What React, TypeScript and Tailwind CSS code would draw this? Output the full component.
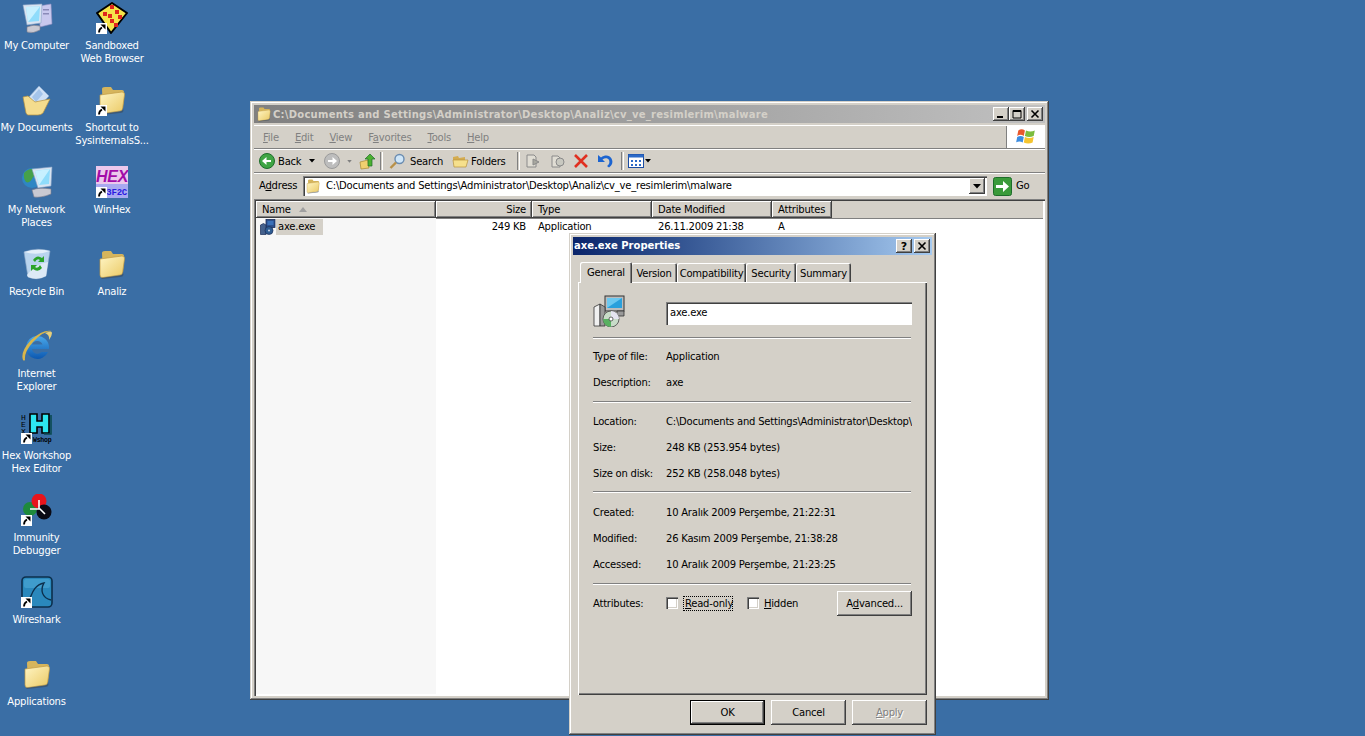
import React from "react";

const Shortcut = () => (
  <span className="absolute left-0 bottom-0 w-[11px] h-[11px] bg-white flex items-center justify-center">
    <svg width="9" height="9" viewBox="0 0 9 9"><path d="M2 8.5 C2 6 3 4.5 5 3.5" stroke="#000" strokeWidth="1.8" fill="none" /><path d="M3.5 0.5 H8.5 V5.5Z" fill="#000" /></svg>
  </span>
);

const FolderIcon = ({ size = 32 }: { size?: number }) => (
  <svg width={size} height={size} viewBox="0 0 32 32">
    <defs>
      <linearGradient id="fg" x1="0" y1="0" x2="1" y2="1"><stop offset="0" stopColor="#fff5c4" /><stop offset="1" stopColor="#eac964" /></linearGradient>
    </defs>
    <path d="M6 5 Q6 3 9 3 L15 3 L17 6 L26 6 Q28 6 28 8 L27 24 L7 28 Z" fill="#d6b55c" />
    <path d="M4 11 L26 8 Q29 8 28.5 11 L26.5 25 Q26 27 24 27 L7 29.5 Q4 30 4 27 Z" fill="url(#fg)" stroke="#c09a42" strokeWidth=".7" />
    <path d="M5 30 L24 27.5 Q27 27 27 24 L27.5 27 Q27 29 24 29 L6 31Z" fill="#3c4a58" opacity=".6" />
  </svg>
);

const ComputerIcon = () => (
  <svg width="32" height="32" viewBox="0 0 32 32">
    <path d="M18 4 L30 2 L31 22 L19 25Z" fill="#c8c8ee" stroke="#8f8fc0" strokeWidth=".6" />
    <path d="M22 7h6v1.5h-6zM22 11h6v1.5h-6z" fill="#8a8ab8" />
    <path d="M2 3 L21 2 L20 21 L6 23Z" fill="#d8e4f2" stroke="#8aa3c4" strokeWidth=".6" />
    <path d="M5 5 L19 4.5 L18 19 L7 20Z" fill="#8fdcfb" />
    <path d="M5 5 L19 4.5 L8 19 L7 20Z" fill="#c7f0ff" />
    <path d="M6 25 Q12 22 19 24 L19 28 Q12 32 6 30Z" fill="#c9c9d2" stroke="#7c7c8c" strokeWidth=".6" />
  </svg>
);

const SandboxIcon = () => (
  <svg width="32" height="32" viewBox="0 0 32 32">
    <path d="M1 11 L16 1 L31 11 L15 31 Z" fill="#f6e34a" stroke="#000" strokeWidth="2" strokeLinejoin="round" />
    {[[14, 3], [7, 10], [12, 12], [19, 8], [14, 17], [22, 13], [18, 21]].map(([x, y], i) => (
      <rect key={i} x={x} y={y} width="4" height="4" fill="#e0261c" />
    ))}
  </svg>
);

const DocsIcon = () => (
  <svg width="32" height="32" viewBox="0 0 32 32">
    <path d="M8 13 L18 2 L28 12 L18 23Z" fill="#cfe1f6" stroke="#8aa8cc" strokeWidth=".6" />
    <path d="M11 13 L18 5 L22 10 L15 18Z" fill="#a4c4ea" />
    <path d="M2 13 L7 12 L14 18 L29 15 L22 29 Q20 31 17 31 L7 31 Q6 31 5 29Z" fill="#f4dc8e" stroke="#b8923e" strokeWidth=".7" />
  </svg>
);

const NetworkIcon = () => (
  <svg width="32" height="32" viewBox="0 0 32 32">
    <circle cx="11" cy="12" r="10" fill="#2e86c4" />
    <path d="M3 7 Q8 2 14 3 Q17 8 12 11 Q9 18 5 16 Q2 12 3 7Z" fill="#46a04a" />
    <path d="M11 3 L31 1 L30 20 L17 22Z" fill="#d8e4f2" stroke="#8aa3c4" strokeWidth=".6" />
    <path d="M14 5 L29 3 L28 18 L18 19Z" fill="#8fdcfb" />
    <path d="M14 5 L29 3 L18 19Z" fill="#c7f0ff" />
    <path d="M11 24 Q18 21 30 23 L30 28 Q20 32 13 31Z" fill="#c9c9d2" stroke="#7c7c8c" strokeWidth=".6" />
  </svg>
);

const WinHexIcon = () => (
  <svg width="32" height="32" viewBox="0 0 32 32">
    <rect width="32" height="18" fill="#ecc8ec" />
    <rect y="18" width="32" height="14" fill="#a9a9f0" />
    <text x="16" y="16" textAnchor="middle" fontFamily="Liberation Sans" fontWeight="700" fontStyle="italic" fontSize="16" fill="#a20ca8">HEX</text>
    <text x="31" y="29" textAnchor="end" fontFamily="Liberation Mono" fontWeight="700" fontSize="9" fill="#2a1ae0">3F2C</text>
  </svg>
);

const RecycleIcon = () => (
  <svg width="32" height="32" viewBox="0 0 32 32">
    <path d="M3 4 Q16 -1 29 3 L25 28 Q16 33 7 29Z" fill="#b9d4ee" stroke="#8fa9c8" strokeWidth=".6" />
    <path d="M3 4 Q16 0 29 3 Q16 8 3 4Z" fill="#e4effa" />
    <path d="M6 27 Q14 16 27 14 L25 28 Q16 33 7 29Z" fill="#dce9f6" />
    <path d="M12 12 Q16 6 21 10 L23 8 L23 14 L17 14 L19 12 Q16 10 14 14Z M21 20 Q17 25 12 21 L10 23 L10 17 L16 17 L14 19 Q17 21 19 17Z" fill="#2aa32a" />
  </svg>
);

const IEIcon = () => (
  <svg width="32" height="32" viewBox="0 0 32 32">
    <defs>
      <linearGradient id="ieg" x1="0" y1="0" x2="0" y2="1"><stop offset="0" stopColor="#4aa8ea" /><stop offset="1" stopColor="#0c58b0" /></linearGradient>
    </defs>
    <path d="M16 6 A11.5 11.5 0 1 0 27 22 L20.5 22 A5.5 5.5 0 0 1 11 19 H28 V17 A11.5 11.5 0 0 0 16 6Z M11 14.5 A5.5 5 0 0 1 21.5 14.5Z" fill="url(#ieg)" fillRule="evenodd" />
    <path d="M2 30 Q-1 22 10 10 Q22 -1 31 1 Q22 1 12 12 Q3 22 4 30 Q3 31 2 30Z" fill="#d9b64a" />
    <path d="M24 3 Q31 0 31 3 Q31 6 28 10 Q29 5 24 3Z" fill="#e8cf7a" />
  </svg>
);

const HexWorkshopIcon = () => (
  <svg width="32" height="32" viewBox="0 0 32 32">
    <path d="M9 2h7v7h5V2h7v19h-7v-6h-5v6H9Z" fill="#2de6f0" stroke="#000" strokeWidth="1.6" />
    <path d="M30 3v19H23" stroke="#0a4a50" strokeWidth="1.6" fill="none" />
    <text x="0" y="8" fontFamily="Liberation Mono" fontSize="8" fill="#000">H</text>
    <text x="0" y="15" fontFamily="Liberation Mono" fontSize="8" fill="#000">E</text>
    <text x="0" y="22" fontFamily="Liberation Mono" fontSize="8" fill="#000">X</text>
    <text x="12" y="30" fontFamily="Liberation Mono" fontSize="6.5" fontWeight="700" fill="#000">Wshop</text>
  </svg>
);

const ImmunityIcon = () => (
  <svg width="32" height="32" viewBox="0 0 32 32">
    <circle cx="9" cy="15" r="7" fill="#1e8a3c" />
    <circle cx="18" cy="7" r="7.5" fill="#e8141c" />
    <circle cx="23" cy="18" r="7.5" fill="#0a0a14" />
    <path d="M18 6 V15 M9 15 H19 L24 20" stroke="#fff" strokeWidth="1.6" fill="none" />
  </svg>
);

const WiresharkIcon = () => (
  <svg width="32" height="32" viewBox="0 0 32 32">
    <rect x="1" y="1" width="30" height="30" rx="4" fill="#2a88bc" stroke="#0c2f4c" strokeWidth="1.6" />
    <rect x="3" y="3" width="26" height="9" rx="2" fill="#3f9ccc" />
    <path d="M5 27 C11 25 9 10 23 7 C19 14 21 22 30 24" fill="none" stroke="#0c2f4c" strokeWidth="1.4" />
  </svg>
);

const desktop: { label: React.ReactNode; icon: React.ReactNode; short?: boolean }[] = [
  { label: <>My Computer</>, icon: <ComputerIcon /> },
  { label: <>Sandboxed<br />Web Browser</>, icon: <SandboxIcon />, short: true },
  { label: <>My Documents</>, icon: <DocsIcon /> },
  { label: <>Shortcut to<br />SysinternalsS...</>, icon: <FolderIcon />, short: true },
  { label: <>My Network<br />Places</>, icon: <NetworkIcon /> },
  { label: <>WinHex</>, icon: <WinHexIcon />, short: true },
  { label: <>Recycle Bin</>, icon: <RecycleIcon /> },
  { label: <>Analiz</>, icon: <FolderIcon /> },
];

const DeskIcon = ({ label, icon, short }: { label: React.ReactNode; icon: React.ReactNode; short?: boolean }) => (
  <div className="h-[82px] flex flex-col items-center text-white text-center">
    <div className="relative w-[32px] h-[32px] mt-[2px]">
      {icon}
      {short && <Shortcut />}
    </div>
    <div className="mt-[5px] leading-[13px] whitespace-nowrap">{label}</div>
  </div>
);

const raised = "shadow-[inset_-1px_-1px_#404040,inset_1px_1px_#ffffff,inset_-2px_-2px_#808080]";
const frame = "bg-[#d4d0c8] shadow-[inset_-1px_-1px_#404040,inset_1px_1px_#d4d0c8,inset_-2px_-2px_#808080,inset_2px_2px_#ffffff]";

const CapBtn = ({ kind }: { kind: "min" | "max" | "close" | "help" }) => (
  <div className={`w-[16px] h-[14px] bg-[#d4d0c8] ${raised} flex items-center justify-center`}>
    {kind === "help" ? (
      <span className="font-bold text-[11px] leading-none tracking-normal text-black">?</span>
    ) : (
      <svg width="10" height="10" viewBox="0 0 10 10">
        {kind === "min" && <rect x="1" y="7" width="6" height="2" fill="#000" />}
        {kind === "max" && <path d="M1 1.5H9V9H1Z" fill="none" stroke="#000" strokeWidth="1" />}
        {kind === "max" && <rect x="1" y="1" width="8" height="2" fill="#000" />}
        {kind === "close" && <path d="M1.5 1.5L8.5 8.5M8.5 1.5L1.5 8.5" stroke="#000" strokeWidth="1.6" />}
      </svg>
    )}
  </div>
);

const Sep = () => <div className="w-[2px] h-[18px] mx-[3px] border-l border-[#808080] shadow-[1px_0_#fff]" />;

const Etched = ({ className = "" }: { className?: string }) => (
  <div className={`w-[318px] h-[2px] border-t border-[#808080] border-b border-b-white ${className}`} />
);

const ColHead = ({ w, right, children }: { w: string; right?: boolean; children: React.ReactNode }) => (
  <div className={`${w} h-[17px] px-[6px] flex items-center ${right ? "justify-end" : ""} bg-[#d4d0c8] ${raised} shrink-0`}>{children}</div>
);

const SetupIcon = () => (
  <svg width="32" height="32" viewBox="0 0 32 32">
    <rect x="12" y="1" width="19" height="15" fill="#bcbcbc" stroke="#333" strokeWidth="1" />
    <rect x="14" y="3" width="15" height="10" fill="#2aa0dc" />
    <path d="M14 3h15L14 13Z" fill="#6cc8f0" />
    <path d="M24 16h7v5h-7z" fill="#999" stroke="#333" strokeWidth=".8" />
    <path d="M1 12 L7 9 L7 31 L1 31Z" fill="#f0f0f0" stroke="#333" strokeWidth=".8" />
    <path d="M7 9 L12 12 L12 31 L7 31Z" fill="#9a9a9a" stroke="#333" strokeWidth=".8" />
    <circle cx="18" cy="24" r="8" fill="#c8dcc8" stroke="#444" strokeWidth=".8" />
    <path d="M18 24 L18 16 A8 8 0 0 1 26 24Z" fill="#e4e4f0" />
    <path d="M18 24 L18 32 A8 8 0 0 1 10 24Z" fill="#58b060" />
    <circle cx="18" cy="24" r="2" fill="#fff" stroke="#444" strokeWidth=".8" />
  </svg>
);

const SetupSmall = () => (
  <svg width="16" height="16" viewBox="0 0 16 16">
    <rect x="6" y="0.5" width="9" height="8" fill="#2c4f8c" stroke="#1a2c58" strokeWidth=".8" />
    <rect x="7.5" y="2" width="6" height="4" fill="#3a70b8" />
    <path d="M0.5 6 L3.5 4.5 L6 6 V15.5 H0.5Z" fill="#44608c" stroke="#1a2c58" strokeWidth=".7" />
    <circle cx="9" cy="11.5" r="4" fill="#2e5c92" stroke="#1a2c58" strokeWidth=".7" />
    <circle cx="9" cy="11.5" r="1" fill="#d0d8e8" />
  </svg>
);

const Row = ({ label, value }: { label: string; value: string }) => (
  <div className="h-[26px] flex items-center whitespace-nowrap">
    <div className="w-[73px] shrink-0">{label}</div>
    <div className="w-[246px] whitespace-nowrap [clip-path:inset(0)]">{value}</div>
  </div>
);

const Check = () => <div className="w-[12px] h-[12px] bg-white shrink-0 shadow-[inset_1px_1px_#808080,inset_2px_2px_#404040,inset_-1px_-1px_#ffffff,inset_-2px_-2px_#d4d0c8]" />;

const Tab = ({ children, w, active }: { children: React.ReactNode; w: string; active?: boolean }) => (
  <div className={`${w} flex items-center justify-center bg-[#d4d0c8] rounded-t-[2px] shadow-[inset_1px_1px_#ffffff,inset_-1px_0_#404040,inset_-2px_0_#808080] ${active ? "h-[21px] relative z-10 -mb-px -mr-[1px]" : "h-[19px] pt-[1px]"}`}>{children}</div>
);

const Btn = ({ children, def, disabled, w = "w-[75px]" }: { children: React.ReactNode; def?: boolean; disabled?: boolean; w?: string }) => (
  <div className={`${w} h-[25px] flex items-center justify-center bg-[#d4d0c8] ${def ? "border border-black shadow-[inset_-1px_-1px_#404040,inset_1px_1px_#ffffff,inset_-2px_-2px_#808080]" : raised} ${disabled ? "text-[#808080] [text-shadow:1px_1px_0_#ffffff]" : ""}`}>{children}</div>
);

export default function App() {
  return (
    <div className="relative w-[1365px] h-[736px] overflow-hidden bg-[#3a6ea5] font-['DejaVu_Sans',sans-serif] text-[10px] tracking-[-0.22px] text-black">
      {/* desktop icons */}
      <div className="flex flex-col w-[151px]">
        <div className="grid grid-cols-[73px_78px]">
          {desktop.map((d, i) => <DeskIcon key={i} {...d} />)}
        </div>
        <div className="w-[73px]">
          <DeskIcon label={<>Internet<br />Explorer</>} icon={<IEIcon />} />
          <DeskIcon label={<>Hex Workshop<br />Hex Editor</>} icon={<HexWorkshopIcon />} short />
          <DeskIcon label={<>Immunity<br />Debugger</>} icon={<ImmunityIcon />} short />
          <DeskIcon label={<>Wireshark</>} icon={<WiresharkIcon />} short />
          <DeskIcon label={<>Applications</>} icon={<FolderIcon />} />
        </div>
      </div>

      {/* Explorer window */}
      <div className={`absolute left-[250px] top-[101px] w-[799px] h-[599px] p-[4px] flex flex-col ${frame}`}>
        <div className="h-[18px] shrink-0 flex items-center pl-[2px] pr-[2px] bg-gradient-to-r from-[#808080] to-[#c0c0c0] text-[#d4d0c8] font-bold">
          <FolderIcon size={16} />
          <span className="ml-[1px] whitespace-nowrap tracking-[0.25px]">C:\Documents and Settings\Administrator\Desktop\Analiz\cv_ve_resimlerim\malware</span>
          <div className="ml-auto flex">
            <CapBtn kind="min" /><CapBtn kind="max" /><div className="w-[2px]" /><CapBtn kind="close" />
          </div>
        </div>
        {/* menu */}
        <div className="h-[24px] shrink-0 mt-[2px] flex border-t border-white items-center justify-between border-b border-b-[#808080] text-[#808080]">
          <div className="flex gap-[16px] pl-[9px]">
            <span><u>F</u>ile</span><span><u>E</u>dit</span><span><u>V</u>iew</span><span>F<u>a</u>vorites</span><span><u>T</u>ools</span><span><u>H</u>elp</span>
          </div>
          <div className="w-[39px] h-[22px] bg-white flex items-center justify-center border-l border-[#808080]">
            <svg width="22" height="20" viewBox="0 0 20 18">
              <path d="M3 3 Q6 1 9 3 L8 8 Q5 6 2 8Z" fill="#e8582c" />
              <path d="M10 3 Q14 5 18 3 L17 8 Q13 10 9 8Z" fill="#7cbc3c" />
              <path d="M2 9 Q5 7 8 9 L7 14 Q4 12 1 14Z" fill="#3c8ce0" />
              <path d="M9 9 Q13 11 17 9 L16 14 Q12 16 8 14Z" fill="#f4c430" />
            </svg>
          </div>
        </div>
        {/* toolbar */}
        <div className="h-[24px] shrink-0 flex items-center pl-[5px] border-t border-white border-b border-b-[#808080]">
          <svg width="16" height="16" viewBox="0 0 16 16"><circle cx="8" cy="8" r="7.5" fill="#3fa544" stroke="#1d6d2a" /><path d="M12 7H7.5V4L3 8l4.5 4V9H12Z" fill="#fff" /></svg>
          <span className="ml-[3px] w-[24px]">Back</span>
          <svg className="ml-[7px]" width="6" height="4" viewBox="0 0 6 4"><path d="M0 0H6L3 3.5Z" fill="#000" /></svg>
          <svg className="ml-[9px]" width="16" height="16" viewBox="0 0 16 16"><circle cx="8" cy="8" r="7.5" fill="#bdbdbd" stroke="#9a9a9a" /><path d="M4 7H8.5V4L13 8l-4.5 4V9H4Z" fill="#fff" /></svg>
          <svg className="ml-[7px]" width="5" height="3" viewBox="0 0 6 4"><path d="M0 0H6L3 3.5Z" fill="#808080" /></svg>
          <svg className="ml-[7px]" width="17" height="17" viewBox="0 0 17 17"><path d="M1 9 L9 7 L10 15 L2 16Z" fill="#f0d070" stroke="#a88830" strokeWidth=".7" /><path d="M11 1 L16 6 H13 V13 H9 V6 H6Z" fill="#4cb030" stroke="#1d6d2a" strokeWidth=".7" /></svg>
          <div className="ml-[1px]"><Sep /></div>
          <svg className="ml-[4px]" width="17" height="17" viewBox="0 0 17 17"><circle cx="10.5" cy="6" r="4.5" fill="#cfe6f8" stroke="#6a8cb0" strokeWidth="1.4" /><path d="M7 9.5L1.5 15" stroke="#b89048" strokeWidth="2.4" /></svg>
          <span className="ml-[4px] w-[32px]">Search</span>
          <svg className="ml-[10px]" width="17" height="16" viewBox="0 0 17 16"><path d="M1 4L6 3l1 2 6-1v3H1Z" fill="#d4ac50" /><path d="M1 7H16L14 14H2Z" fill="#f6e08c" stroke="#b8923e" strokeWidth=".7" /></svg>
          <span className="ml-[2px] w-[36px]">Folders</span>
          <div className="ml-[7px]"><Sep /></div>
          <svg className="ml-[3px]" width="17" height="16" viewBox="0 0 17 16"><path d="M2 2h7l2 2v10H2Z" fill="#e0ddd4" stroke="#8a8a8a" /><path d="M8 6l6 3-6 3Z" fill="#a8a8a0" stroke="#8a8a8a" /></svg>
          <svg className="ml-[7px]" width="17" height="16" viewBox="0 0 17 16"><path d="M3 3h6l2 2v9H3Z" fill="#e0ddd4" stroke="#8a8a8a" /><circle cx="11" cy="9" r="4" fill="#c8c8c0" stroke="#8a8a8a" /></svg>
          <svg className="ml-[7px]" width="16" height="16" viewBox="0 0 16 16"><path d="M2 2L14 14M14 2L2 14" stroke="#e03020" strokeWidth="2.6" /></svg>
          <svg className="ml-[7px]" width="17" height="16" viewBox="0 0 17 16"><path d="M2 2v7h7L6.5 6.5C9 4.5 12 5 13 7c1 2.5 0 4.5-2 6l2 1.5c3-2 4.5-5.5 2.5-9C13.5 2 9 1.5 5 4.5Z" fill="#1c64d0" /></svg>
          <div className="ml-[5px]"><Sep /></div>
          <svg className="ml-[2px]" width="16" height="14" viewBox="0 0 16 14"><rect x=".5" y=".5" width="15" height="13" fill="#fff" stroke="#1c4ca0" /><rect x=".5" y=".5" width="15" height="3" fill="#2c6ac8" /><path d="M3 6h2v2H3zM7 6h2v2H7zM11 6h2v2h-2zM3 10h2v2H3zM7 10h2v2H7zM11 10h2v2h-2z" fill="#2c6ac8" /></svg>
          <svg className="ml-[1px]" width="6" height="4" viewBox="0 0 6 4"><path d="M0 0H6L3 3.5Z" fill="#000" /></svg>
        </div>
        {/* address */}
        <div className="h-[25px] shrink-0 flex items-center pl-[5px] border-t border-white">
          <span className="w-[44px] pb-[1px]">A<u>d</u>dress</span>
          <div className="w-[684px] h-[20px] bg-white flex items-center pl-[2px] shadow-[inset_1px_1px_#808080,inset_2px_2px_#404040] relative">
            <FolderIcon size={16} />
            <span className="ml-[5px] pb-[1px] whitespace-nowrap">C:\Documents and Settings\Administrator\Desktop\Analiz\cv_ve_resimlerim\malware</span>
            <div className={`absolute right-[2px] top-[2px] w-[16px] h-[16px] bg-[#d4d0c8] ${raised} flex items-center justify-center`}>
              <svg width="8" height="5" viewBox="0 0 8 5"><path d="M0 0H8L4 4.5Z" fill="#000" /></svg>
            </div>
          </div>
          <svg className="ml-[6px]" width="19" height="19" viewBox="0 0 19 19"><rect x=".5" y=".5" width="18" height="18" rx="2" fill="#3a9a3a" stroke="#1d6d2a" /><path d="M3 8h7V4l6 5.5-6 5.5v-4H3Z" fill="#fff" /></svg>
          <span className="ml-[4px] pb-[1px]">Go</span>
        </div>
        {/* list */}
        <div className="flex-1 min-h-0 mt-[1px] bg-white flex flex-col shadow-[inset_1px_1px_#808080,inset_2px_2px_#404040,inset_-1px_-1px_#ffffff] p-[2px]">
          <div className="flex h-[17px] bg-[#d4d0c8] shrink-0 shadow-[0_1px_#808080]">
            <ColHead w="w-[180px]"><span>Name</span><svg className="ml-[8px]" width="8" height="5" viewBox="0 0 8 5"><path d="M4 0L8 5H0Z" fill="#a0a0a0" /></svg></ColHead>
            <ColHead w="w-[96px]" right>Size</ColHead>
            <ColHead w="w-[120px]">Type</ColHead>
            <ColHead w="w-[120px]">Date Modified</ColHead>
            <ColHead w="w-[60px]">Attributes</ColHead>
          </div>
          <div className="flex-1 min-h-0 flex">
            <div className="w-[180px] bg-[#f7f7f7] pt-[1px] pl-[4px]">
              <div className="h-[16px] flex items-center">
                <SetupSmall />
                <span className="bg-[#d4d0c8] h-[16px] px-[2px] leading-[16px] w-[47px]">axe.exe</span>
              </div>
            </div>
            <div className="w-[96px] h-[17px] pr-[6px] text-right leading-[17px]">249 KB</div>
            <div className="w-[120px] h-[17px] pl-[6px] leading-[17px]">Application</div>
            <div className="w-[120px] h-[17px] pl-[6px] leading-[17px]">26.11.2009 21:38</div>
            <div className="w-[60px] h-[17px] pl-[6px] leading-[17px]">A</div>
          </div>
        </div>
      </div>

      {/* Properties dialog */}
      <div className={`absolute left-[569px] top-[233px] w-[367px] h-[502px] p-[4px] flex flex-col ${frame}`}>
        <div className="h-[18px] shrink-0 flex items-center pl-[1px] pr-[2px] bg-gradient-to-r from-[#0a246a] to-[#a6caf0] text-white font-bold">
          <span className="pb-[1px] tracking-normal">axe.exe Properties</span>
          <div className="ml-auto flex">
            <CapBtn kind="help" /><div className="w-[2px]" /><CapBtn kind="close" />
          </div>
        </div>
        <div className="flex-1 min-h-0 flex flex-col pt-[7px] px-[5px]">
          <div className="flex items-end pl-[2px] h-[20px] shrink-0">
            <Tab w="w-[52px]" active>General</Tab>
            <Tab w="w-[46px]">Version</Tab>
            <Tab w="w-[69px]">Compatibility</Tab>
            <Tab w="w-[50px]">Security</Tab>
            <Tab w="w-[55px]">Summary</Tab>
          </div>
          <div className="h-[413px] w-[349px] pl-[15px] pt-[13px] shrink-0 shadow-[inset_1px_1px_#ffffff,inset_-1px_-1px_#404040,inset_-2px_-2px_#808080]">
            <div className="flex h-[32px]">
              <SetupIcon />
              <div className="ml-[41px] mt-[7px] w-[246px] h-[23px] bg-white flex items-center pl-[4px] pb-[2px] shadow-[inset_1px_1px_#808080,inset_2px_2px_#404040,inset_-1px_-1px_#ffffff]">axe.exe</div>
            </div>
            <Etched className="mt-[10px]" />
            <div className="mt-[4px]">
              <Row label="Type of file:" value="Application" />
              <Row label="Description:" value="axe" />
            </div>
            <Etched className="mt-[6px]" />
            <div className="mt-[5px]">
              <Row label="Location:" value="C:\Documents and Settings\Administrator\Desktop\" />
              <Row label="Size:" value="248 KB (253.954 bytes)" />
              <Row label="Size on disk:" value="252 KB (258.048 bytes)" />
            </div>
            <Etched className="mt-[5px]" />
            <div className="mt-[6px]">
              <Row label="Created:" value="10 Aralık 2009 Perşembe, 21:22:31" />
              <Row label="Modified:" value="26 Kasım 2009 Perşembe, 21:38:28" />
              <Row label="Accessed:" value="10 Aralık 2009 Perşembe, 21:23:25" />
            </div>
            <Etched className="mt-[6px]" />
            <div className="mt-[6px] h-[24px] flex items-center w-[319px]">
              <div className="w-[73px]">Attributes:</div>
              <Check />
              <span className="ml-[5px] w-[50px] pl-[1px] whitespace-nowrap border border-dotted border-black leading-[13px]"><u>R</u>ead-only</span>
              <div className="ml-[14px]"><Check /></div>
              <span className="ml-[5px]"><u>H</u>idden</span>
              <div className="ml-auto"><Btn w="w-[75px]">A<u>d</u>vanced...</Btn></div>
            </div>
          </div>
          <div className="flex justify-end gap-[6px] mt-[5px]">
            <Btn def>OK</Btn>
            <Btn>Cancel</Btn>
            <Btn disabled><u>A</u>pply</Btn>
          </div>
        </div>
      </div>
    </div>
  );
}
